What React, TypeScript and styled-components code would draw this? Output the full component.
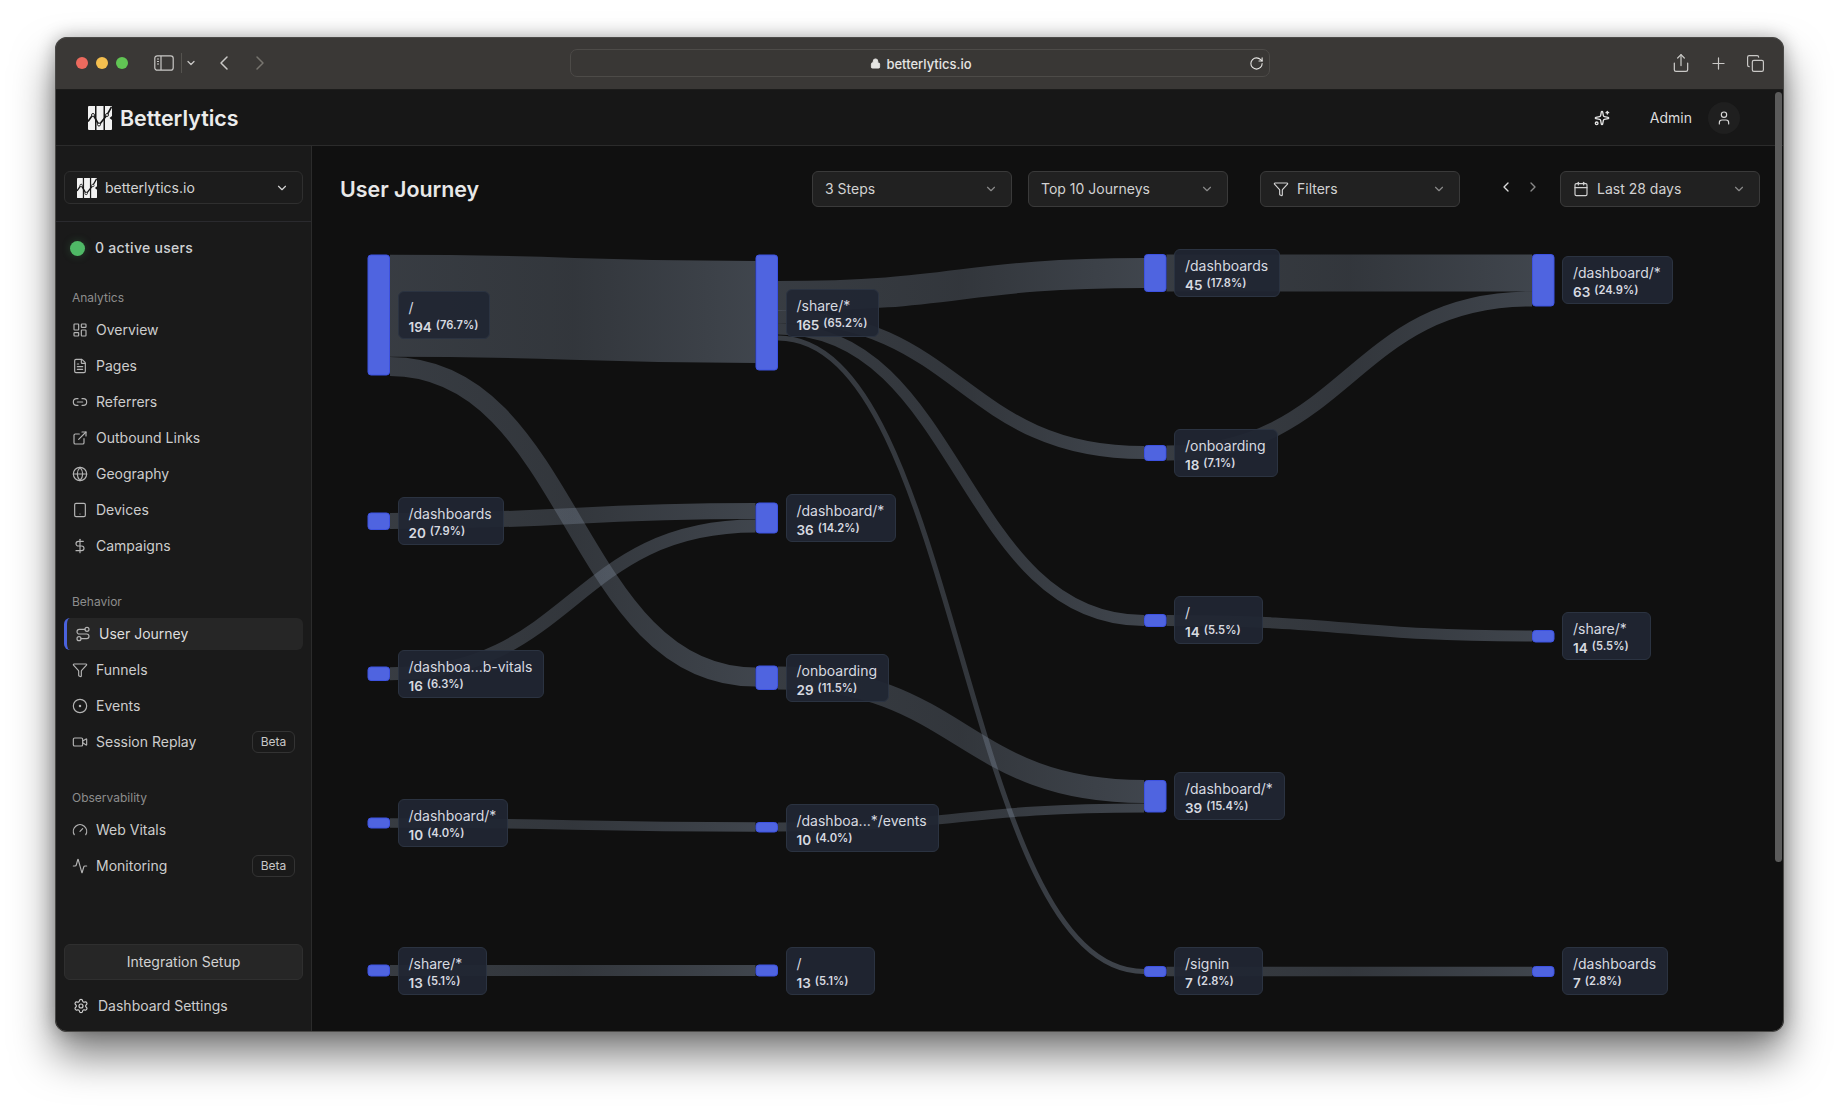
import React from 'react'
import styled, { createGlobalStyle } from 'styled-components'
import {
  Activity, Calendar, ChevronDown, ChevronLeft, ChevronRight, CircleDot, Copy, DollarSign, ExternalLink,
  FileText, Funnel, Gauge, Globe, LayoutDashboard, Link2, Lock, Plus, Route, RotateCw, Settings, Share,
  Sparkles, Tablet, User, Video,
} from 'lucide-react'

const GlobalStyle = createGlobalStyle`
  html, body {
    margin: 0;
    height: 1106px;
    overflow: hidden;
    background: #fff;
    font-family: Inter, "Noto Sans", sans-serif;
  }
  body {
    padding-top: 37px;
  }
  * { box-sizing: border-box; }
`

const BrowserWindow = styled.div`
  position: relative;
  width: 1729px;
  height: 995px;
  margin-left: 55px;
  border-radius: 12px;
  overflow: hidden;
  display: flex;
  flex-direction: column;
  box-shadow: 0 24px 42px rgba(0, 0, 0, 0.5), 0 0 18px rgba(0, 0, 0, 0.28);
  outline: 1px solid #4a4947;
  outline-offset: -1px;
`

const Toolbar = styled.div`
  height: 53px;
  flex: none;
  background: #3a3836;
  border-bottom: 1px solid #1c1c1b;
  display: grid;
  grid-template-columns: 1fr 700px 1fr;
  align-items: center;
  color: #c9c8c6;
`

const ToolbarLeft = styled.div`
  display: flex;
  align-items: center;
  padding-left: 21px;
`

const Light = styled.span<{ $color: string }>`
  width: 12px;
  height: 12px;
  border-radius: 50%;
  margin-right: 8px;
  background: ${(p) => p.$color};
`

const SidebarGlyph = styled.svg`
  width: 20px;
  height: 16px;
  margin-left: 18px;
`

const ToolbarDivider = styled.span`
  width: 1px;
  height: 20px;
  background: #55534f;
  margin: 0 3px 0 7px;
`

const BackIcon = styled(ChevronLeft)`
  margin-left: 15px;
`

const ForwardIcon = styled(ChevronRight)`
  margin-left: 12px;
  color: #77756f;
`

const UrlBar = styled.div`
  position: relative;
  height: 28px;
  padding: 1px 0 0 3px;
  border: 1px solid #4d4b48;
  border-radius: 7px;
  background: #393735;
  display: flex;
  align-items: center;
  justify-content: center;
  gap: 5px;
  font-size: 13px;
  font-weight: 500;
  color: #e6e5e3;
`

const LockGlyph = styled(Lock)`
  fill: currentColor;
`

const ReloadIcon = styled(RotateCw)`
  position: absolute;
  right: 5px;
  top: 6px;
`

const ToolbarRight = styled.div`
  display: flex;
  align-items: center;
  justify-content: flex-end;
  gap: 18px;
  padding-right: 19px;
`

const AppHeader = styled.header`
  height: 56px;
  flex: none;
  background: #171717;
  border-bottom: 1px solid #2b2b2b;
  display: flex;
  align-items: center;
  padding: 0 44px 0 33px;
`

const Brand = styled.div`
  display: flex;
  align-items: center;
  gap: 8px;
  font-size: 21.4px;
  font-weight: 600;
  color: #ececec;
  flex: 1;
`

const HeaderSpark = styled(Sparkles)`
  color: #e4e4e4;
  margin-right: 40px;
`

const AdminName = styled.span`
  font-size: 14px;
  color: #dcdcdc;
  margin-right: 16px;
`

const Avatar = styled.span`
  width: 32px;
  height: 32px;
  border-radius: 50%;
  background: #1f1f1f;
  color: #d8d8d8;
  display: flex;
  align-items: center;
  justify-content: center;
`

const Body = styled.div`
  flex: 1;
  min-height: 0;
  display: flex;
`

const Sidebar = styled.aside`
  width: 257px;
  flex: none;
  background: #1a1a1a;
  border-right: 1px solid #2b2b2b;
  display: flex;
  flex-direction: column;
`

const SiteSection = styled.div`
  padding: 25px 8px 17px 9px;
  border-bottom: 1px solid #2a2a2e;
`

const SiteSelect = styled.div`
  height: 33px;
  border: 1px solid #2f2f2f;
  border-radius: 6px;
  background: #1c1c1c;
  display: flex;
  align-items: center;
  gap: 8px;
  padding: 0 13px 0 12px;
  font-size: 14px;
  color: #d4d4d4;
`

const SiteName = styled.span`
  flex: 1;
`

const ActiveUsers = styled.div`
  height: 52px;
  display: flex;
  align-items: center;
  gap: 10px;
  padding-left: 15px;
  font-size: 14px;
  font-weight: 500;
  letter-spacing: 0.3px;
  color: #cfd1d4;
`

const ActiveText = styled.span`
  padding-bottom: 2px;
`

const LiveDot = styled.span`
  width: 15px;
  height: 15px;
  border-radius: 50%;
  background: #4fb966;
  box-shadow: 0 0 8px rgba(79, 185, 102, 0.25);
`

const NavGroup = styled.nav`
  padding: 16px 8px 16px 9px;
`

const GroupLabel = styled.div`
  height: 16px;
  line-height: 16px;
  margin-bottom: 8px;
  padding-left: 8px;
  font-size: 12px;
  color: #8d8d8d;
`

const NavList = styled.div`
  display: flex;
  flex-direction: column;
  gap: 4px;
`

const NavRow = styled.div<{ $active?: boolean }>`
  height: 32px;
  display: flex;
  align-items: center;
  gap: 8px;
  padding: 0 8px;
  border-radius: 6px;
  font-size: 14px;
  color: ${(p) => (p.$active ? '#dedede' : '#cdcdcd')};
  background: ${(p) => (p.$active ? '#262626' : 'transparent')};
  border-left: ${(p) => (p.$active ? '3px solid #4a62de' : '0')};

  svg {
    color: #b4b4b4;
    flex: none;
  }
`

const NavText = styled.span`
  flex: 1;
  padding-bottom: 2px;
`

const BetaBadge = styled.span`
  height: 22px;
  width: 43px;
  border: 1px solid #333;
  border-radius: 6px;
  font-size: 12px;
  line-height: 20px;
  text-align: center;
  color: #c8c8c8;
`

const SidebarFooter = styled.div`
  margin-top: auto;
  padding: 0 8px 10px 9px;
`

const SetupButton = styled.div`
  height: 36px;
  padding-bottom: 2px;
  border: 1px solid #2f2f2f;
  border-radius: 6px;
  background: #262626;
  display: flex;
  align-items: center;
  justify-content: center;
  font-size: 14px;
  color: #d2d2d2;
`

const SettingsRow = styled(NavRow)`
  margin-top: 10px;
  gap: 9px;
  padding-left: 9px;

  svg {
    color: #d0d0d0;
  }
`

const Main = styled.main`
  flex: 1;
  min-width: 0;
  background: #101010;
  padding: 25px 24px 0 28px;
  overflow: hidden;
`

const TopBar = styled.div`
  display: flex;
  align-items: center;
  height: 36px;
`

const PageTitle = styled.h1`
  flex: 1;
  margin: 0;
  font-size: 21.4px;
  font-weight: 600;
  color: #e8e8e8;
`

const Dropdown = styled.div<{ $gap?: number }>`
  width: 200px;
  height: 36px;
  margin-left: ${(p) => p.$gap ?? 16}px;
  border: 1px solid #3a3a3a;
  border-radius: 6px;
  background: #212121;
  display: flex;
  align-items: center;
  gap: 8px;
  padding: 0 13px 0 12px;
  font-size: 14px;
  color: #d2d2d2;

  svg:last-child {
    color: #8a8a8a;
  }
`

const DropdownText = styled.span`
  flex: 1;
  padding-bottom: 2px;
`

const RangeArrows = styled.div`
  display: flex;
  gap: 11px;
  margin: -4px 19px 0 38px;
  color: #dcdcdc;
`

const NextArrow = styled(ChevronRight)`
  color: #8a8a8a;
`

const Canvas = styled.div`
  position: relative;
  margin-top: 33px;
  height: 792px;
`

const FlowChart = styled.svg`
  display: block;
  width: 100%;
  height: 100%;
`

const NodeLabel = styled.div.attrs<{ $x: number; $y: number }>((p) => ({
  style: { left: p.$x, top: p.$y },
}))`
  position: absolute;
  min-width: 89px;
  height: 48px;
  padding: 7px 11px 0 10px;
  border: 1px solid #2b3341;
  border-radius: 6px;
  background: rgba(32, 38, 51, 0.93);
  white-space: nowrap;
`

const LabelName = styled.div`
  height: 18px;
  line-height: 18px;
  font-size: 14px;
  color: #d7dae0;
`

const LabelStats = styled.div`
  height: 20px;
  line-height: 20px;
  display: flex;
  align-items: baseline;
  gap: 4px;
  font-weight: 600;
  color: #d7dae0;
`

const LabelCount = styled.span`
  font-size: 13.5px;
`

const LabelPct = styled.span`
  font-size: 11.2px;
  position: relative;
  top: -3px;
`

const ScrollThumb = styled.div`
  position: absolute;
  top: 55px;
  right: 2px;
  width: 7px;
  height: 770px;
  border-radius: 4px;
  background: #5b5b5b;
`

// chart numbers are page coordinates, Canvas starts at this point
const OX = 340
const OY = 240
const COLS = [367.5, 755.5, 1144, 1532]
const NODE_W = 22.5

type JourneyNode = { col: number; y0: number; y1: number; name: string; count: number; pct: string; top: number }

const nodes: JourneyNode[] = [
  { col: 0, y0: 254.5, y1: 375.5, name: '/', count: 194, pct: '76.7%', top: 291 },
  { col: 0, y0: 512.5, y1: 530, name: '/dashboards', count: 20, pct: '7.9%', top: 497 },
  { col: 0, y0: 666.5, y1: 681, name: '/dashboa...b-vitals', count: 16, pct: '6.3%', top: 650 },
  { col: 0, y0: 817.5, y1: 828.5, name: '/dashboard/*', count: 10, pct: '4.0%', top: 799 },
  { col: 0, y0: 964.5, y1: 976.5, name: '/share/*', count: 13, pct: '5.1%', top: 947 },
  { col: 1, y0: 254.5, y1: 370.5, name: '/share/*', count: 165, pct: '65.2%', top: 289 },
  { col: 1, y0: 502.5, y1: 533.5, name: '/dashboard/*', count: 36, pct: '14.2%', top: 494 },
  { col: 1, y0: 665.5, y1: 690, name: '/onboarding', count: 29, pct: '11.5%', top: 653.5 },
  { col: 1, y0: 822, y1: 832.5, name: '/dashboa...*/events', count: 10, pct: '4.0%', top: 803.5 },
  { col: 1, y0: 964.5, y1: 976.5, name: '/', count: 13, pct: '5.1%', top: 947 },
  { col: 2, y0: 254, y1: 292, name: '/dashboards', count: 45, pct: '17.8%', top: 249 },
  { col: 2, y0: 445, y1: 461, name: '/onboarding', count: 18, pct: '7.1%', top: 429 },
  { col: 2, y0: 614, y1: 627, name: '/', count: 14, pct: '5.5%', top: 596 },
  { col: 2, y0: 780, y1: 812.5, name: '/dashboard/*', count: 39, pct: '15.4%', top: 772 },
  { col: 2, y0: 966, y1: 977, name: '/signin', count: 7, pct: '2.8%', top: 947 },
  { col: 3, y0: 254, y1: 306.5, name: '/dashboard/*', count: 63, pct: '24.9%', top: 256 },
  { col: 3, y0: 630, y1: 642.5, name: '/share/*', count: 14, pct: '5.5%', top: 612 },
  { col: 3, y0: 966, y1: 977, name: '/dashboards', count: 7, pct: '2.8%', top: 947 },
]

// [from column, y at the left end, y at the right end, thickness]
const links: [number, number, number, number][] = [
  [0, 305.7, 312, 102],
  [0, 366.5, 677, 19],
  [0, 521, 511, 16],
  [0, 673.7, 526, 13],
  [0, 823, 827, 9.5],
  [0, 970.5, 970.5, 11],
  [1, 296, 273, 30],
  [1, 317, 452.6, 13],
  [1, 329, 620.5, 11],
  [1, 338, 971.5, 5],
  [1, 678, 791.5, 23],
  [1, 827, 808, 9],
  [2, 273, 273, 37],
  [2, 453, 299, 15],
  [2, 620.5, 636, 11],
  [2, 971.5, 971.5, 9.5],
]

function BrandMark({ size }: { size: number }): React.ReactElement {
  return (
    <svg width={size} height={size} viewBox="0 0 24 24" aria-hidden="true">
      <path d="M1 0h6v24H1a1 1 0 0 1-1-1V1a1 1 0 0 1 1-1z" fill="#f2f2f2" />
      <rect x="8.5" y="0" width="7" height="24" fill="#f2f2f2" />
      <path d="M17 0h6a1 1 0 0 1 1 1v22a1 1 0 0 1-1 1h-6z" fill="#f2f2f2" />
      <path d="M24.5 9.5 21.5 12l3 2.5z" fill="#171717" />
      <path d="M0 15.5 5 8.5l6 10.5L19 9l4.5-8" fill="none" stroke="#171717" strokeWidth="1.6" />
      <circle cx="5" cy="9" r="1.5" fill="#f2f2f2" stroke="#171717" strokeWidth="0.9" />
      <circle cx="11" cy="18.5" r="1.5" fill="#f2f2f2" stroke="#171717" strokeWidth="0.9" />
      <circle cx="19" cy="9" r="1.5" fill="#f2f2f2" stroke="#171717" strokeWidth="0.9" />
    </svg>
  )
}

function Journey(): React.ReactElement {
  return (
    <Canvas>
      <FlowChart>
        <defs>
          {links.map(([col], i) => (
            <linearGradient
              key={i}
              id={`link-${i}`}
              gradientUnits="userSpaceOnUse"
              x1={COLS[col] + NODE_W - OX}
              x2={COLS[col + 1] - OX}
              y1="0"
              y2="0"
            >
              <stop offset="0" stopColor="#94a3b8" stopOpacity="0.3" />
              <stop offset="0.5" stopColor="#94a3b8" stopOpacity="0.26" />
              <stop offset="1" stopColor="#94a3b8" stopOpacity="0.36" />
            </linearGradient>
          ))}
        </defs>
        {links.map(([col, from, to, width], i) => {
          const x0 = COLS[col] + NODE_W - OX
          const x1 = COLS[col + 1] - OX
          const mid = (x0 + x1) / 2
          return (
            <path
              key={i}
              d={`M${x0} ${from - OY}C${mid} ${from - OY} ${mid} ${to - OY} ${x1} ${to - OY}`}
              fill="none"
              stroke={`url(#link-${i})`}
              strokeWidth={width}
            />
          )
        })}
        {nodes.map((n, i) => (
          <rect
            key={i}
            x={COLS[n.col] - OX + 0.5}
            y={n.y0 - OY + 0.5}
            width={NODE_W - 1}
            height={n.y1 - n.y0 - 1}
            rx="3"
            fill="#4f64e0"
            stroke="#3d52e2"
          />
        ))}
      </FlowChart>
      {nodes.map((n, i) => (
        <NodeLabel key={i} $x={COLS[n.col] + 30 - OX} $y={n.top - OY}>
          <LabelName>{n.name}</LabelName>
          <LabelStats>
            <LabelCount>{n.count}</LabelCount>
            <LabelPct>({n.pct})</LabelPct>
          </LabelStats>
        </NodeLabel>
      ))}
    </Canvas>
  )
}

const analytics = [
  { icon: LayoutDashboard, label: 'Overview' },
  { icon: FileText, label: 'Pages' },
  { icon: Link2, label: 'Referrers' },
  { icon: ExternalLink, label: 'Outbound Links' },
  { icon: Globe, label: 'Geography' },
  { icon: Tablet, label: 'Devices' },
  { icon: DollarSign, label: 'Campaigns' },
]

const behavior = [
  { icon: Route, label: 'User Journey', active: true },
  { icon: Funnel, label: 'Funnels' },
  { icon: CircleDot, label: 'Events' },
  { icon: Video, label: 'Session Replay', beta: true },
]

const observability = [
  { icon: Gauge, label: 'Web Vitals' },
  { icon: Activity, label: 'Monitoring', beta: true },
]

type NavItem = { icon: typeof Globe; label: string; active?: boolean; beta?: boolean }

function SideGroup({ title, items }: { title: string; items: NavItem[] }): React.ReactElement {
  return (
    <NavGroup>
      <GroupLabel>{title}</GroupLabel>
      <NavList>
        {items.map(({ icon: Icon, label, active, beta }) => (
          <NavRow key={label} $active={active}>
            <Icon size={16} strokeWidth={1.75} />
            <NavText>{label}</NavText>
            {beta && <BetaBadge>Beta</BetaBadge>}
          </NavRow>
        ))}
      </NavList>
    </NavGroup>
  )
}

export default function App(): React.ReactElement {
  return (
    <>
      <GlobalStyle />
      <BrowserWindow>
        <Toolbar>
          <ToolbarLeft>
            <Light $color="#ec6a5e" />
            <Light $color="#f4bf4f" />
            <Light $color="#61c554" />
            <SidebarGlyph viewBox="0 0 20 16" fill="none" stroke="#c9c8c6" strokeWidth="1.2">
              <rect x="0.8" y="0.8" width="18.4" height="14.4" rx="2.5" />
              <path d="M7 1v14M3 4h2M3 6.5h2M3 9h2" />
            </SidebarGlyph>
            <ToolbarDivider />
            <ChevronDown size={12} strokeWidth={2.5} />
            <BackIcon size={24} strokeWidth={1.5} />
            <ForwardIcon size={24} strokeWidth={1.5} />
          </ToolbarLeft>
          <UrlBar>
            <LockGlyph size={11} strokeWidth={2} />
            betterlytics.io
            <ReloadIcon size={15} strokeWidth={1.75} />
          </UrlBar>
          <ToolbarRight>
            <Share size={20} strokeWidth={1.5} />
            <Plus size={19} strokeWidth={1.5} />
            <Copy size={19} strokeWidth={1.5} />
          </ToolbarRight>
        </Toolbar>
        <AppHeader>
          <Brand>
            <BrandMark size={24} />
            Betterlytics
          </Brand>
          <HeaderSpark size={16} strokeWidth={2} />
          <AdminName>Admin</AdminName>
          <Avatar>
            <User size={16} strokeWidth={1.75} />
          </Avatar>
        </AppHeader>
        <Body>
          <Sidebar>
            <SiteSection>
              <SiteSelect>
                <BrandMark size={20} />
                <SiteName>betterlytics.io</SiteName>
                <ChevronDown size={14} />
              </SiteSelect>
            </SiteSection>
            <ActiveUsers>
              <LiveDot />
              <ActiveText>0 active users</ActiveText>
            </ActiveUsers>
            <SideGroup title="Analytics" items={analytics} />
            <SideGroup title="Behavior" items={behavior} />
            <SideGroup title="Observability" items={observability} />
            <SidebarFooter>
              <SetupButton>Integration Setup</SetupButton>
              <SettingsRow>
                <Settings size={16} strokeWidth={1.75} />
                <NavText>Dashboard Settings</NavText>
              </SettingsRow>
            </SidebarFooter>
          </Sidebar>
          <Main>
            <TopBar>
              <PageTitle>User Journey</PageTitle>
              <Dropdown>
                <DropdownText>3 Steps</DropdownText>
                <ChevronDown size={14} />
              </Dropdown>
              <Dropdown>
                <DropdownText>Top 10 Journeys</DropdownText>
                <ChevronDown size={14} />
              </Dropdown>
              <Dropdown $gap={32}>
                <Funnel size={16} strokeWidth={1.75} />
                <DropdownText>Filters</DropdownText>
                <ChevronDown size={14} />
              </Dropdown>
              <RangeArrows>
                <ChevronLeft size={16} />
                <NextArrow size={16} />
              </RangeArrows>
              <Dropdown $gap={0}>
                <Calendar size={16} strokeWidth={1.75} />
                <DropdownText>Last 28 days</DropdownText>
                <ChevronDown size={14} />
              </Dropdown>
            </TopBar>
            <Journey />
          </Main>
        </Body>
        <ScrollThumb />
      </BrowserWindow>
    </>
  )
}
